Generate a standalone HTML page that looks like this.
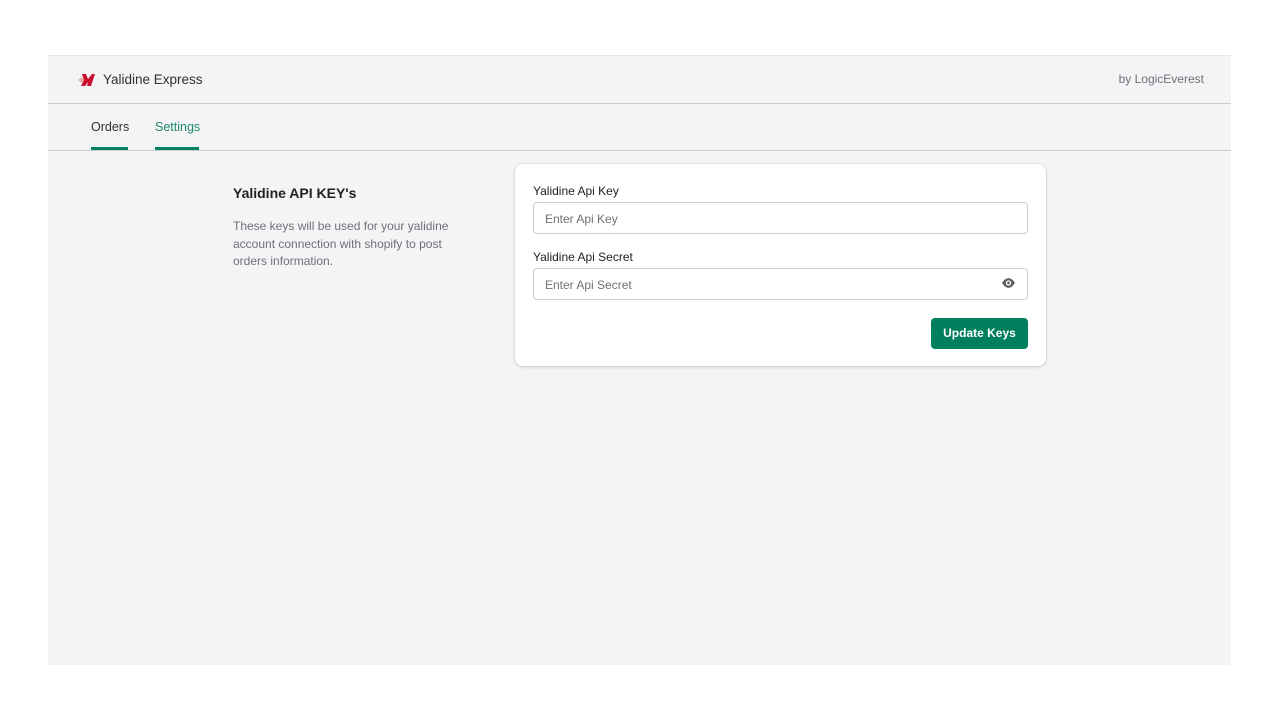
<!DOCTYPE html>
<html><head><style>
*{box-sizing:border-box;margin:0;padding:0}
body{width:1280px;height:720px;background:#fff;font-family:"Liberation Sans",sans-serif;position:relative;overflow:hidden}
.app{position:absolute;left:48px;top:55px;width:1183px;height:610px;background:#f4f4f6;border-top:1px solid #e8e8e8}
.hdr{height:48px;border-bottom:1px solid #c9cccf;position:relative}
.logo{position:absolute;left:30px;top:17px}
.title{position:absolute;left:55px;top:16px;font-size:13.5px;color:#303030}
.by{position:absolute;right:27px;top:16px;font-size:12px;color:#6d7175}
.tabs{height:47px;border-bottom:1px solid #c9cccf;position:relative}
.tab{position:absolute;top:16px;font-size:12.5px;height:30px}
.tab::after{content:"";position:absolute;left:0;right:0;bottom:0;height:3px;background:#008060}
.t1{left:43px;color:#303030;width:37px}
.t2{left:107px;color:#1f8a6b;width:44px}
.h{position:absolute;left:185px;top:129px;font-size:14px;font-weight:bold;color:#202223}
.p{position:absolute;left:185px;top:162px;width:230px;font-size:12px;line-height:17.5px;color:#6d7175}
.card{position:absolute;left:467px;top:108px;width:531px;height:202px;background:#fff;border-radius:8px;box-shadow:0 0 0 1px rgba(63,63,68,.05),0 1px 3px rgba(63,63,68,.2)}
.lbl{position:absolute;left:18px;font-size:12px;color:#202223}
.inp{position:absolute;left:18px;width:495px;height:32px;border:1px solid #c9cccf;border-radius:4px;font-size:12px;color:#6d7175;padding:9px 11px}
.btn{position:absolute;left:416px;top:154px;width:97px;height:31px;background:#007f5f;border-radius:4px;color:#fff;font-size:12px;font-weight:bold;text-align:center;line-height:31px}
</style></head><body>
<div class="app">
<div class="hdr">
<svg class="logo" width="18" height="14" viewBox="0 0 18 14"><path d="M4 1h4l2 5 4-5h3l-4 12H9l1-4-3 4H3l3-6z" fill="#c8102e"/><path d="M0 7l4-3 2 3-2 3z" fill="#e57373" opacity=".6"/></svg>
<div class="title">Yalidine Express</div>
<div class="by">by LogicEverest</div>
</div>
<div class="tabs"><div class="tab t1">Orders</div><div class="tab t2">Settings</div></div>
<div class="h">Yalidine API KEY's</div>
<div class="p">These keys will be used for your yalidine account connection with shopify to post orders information.</div>
<div class="card">
<div class="lbl" style="top:20px">Yalidine Api Key</div>
<div class="inp" style="top:38px">Enter Api Key</div>
<div class="lbl" style="top:86px">Yalidine Api Secret</div>
<div class="inp" style="top:104px">Enter Api Secret
<svg style="position:absolute;right:11px;top:8px" width="15" height="12" viewBox="0 0 14 11"><path d="M7 1C3.5 1 1 5.5 1 5.5S3.5 10 7 10s6-4.5 6-4.5S10.5 1 7 1z" fill="#5c5f62"/><circle cx="7" cy="5.5" r="2.5" fill="#fff"/><circle cx="7" cy="5.5" r="1.3" fill="#5c5f62"/></svg>
</div>
<div class="btn">Update Keys</div>
</div>
</div>
</body></html>
